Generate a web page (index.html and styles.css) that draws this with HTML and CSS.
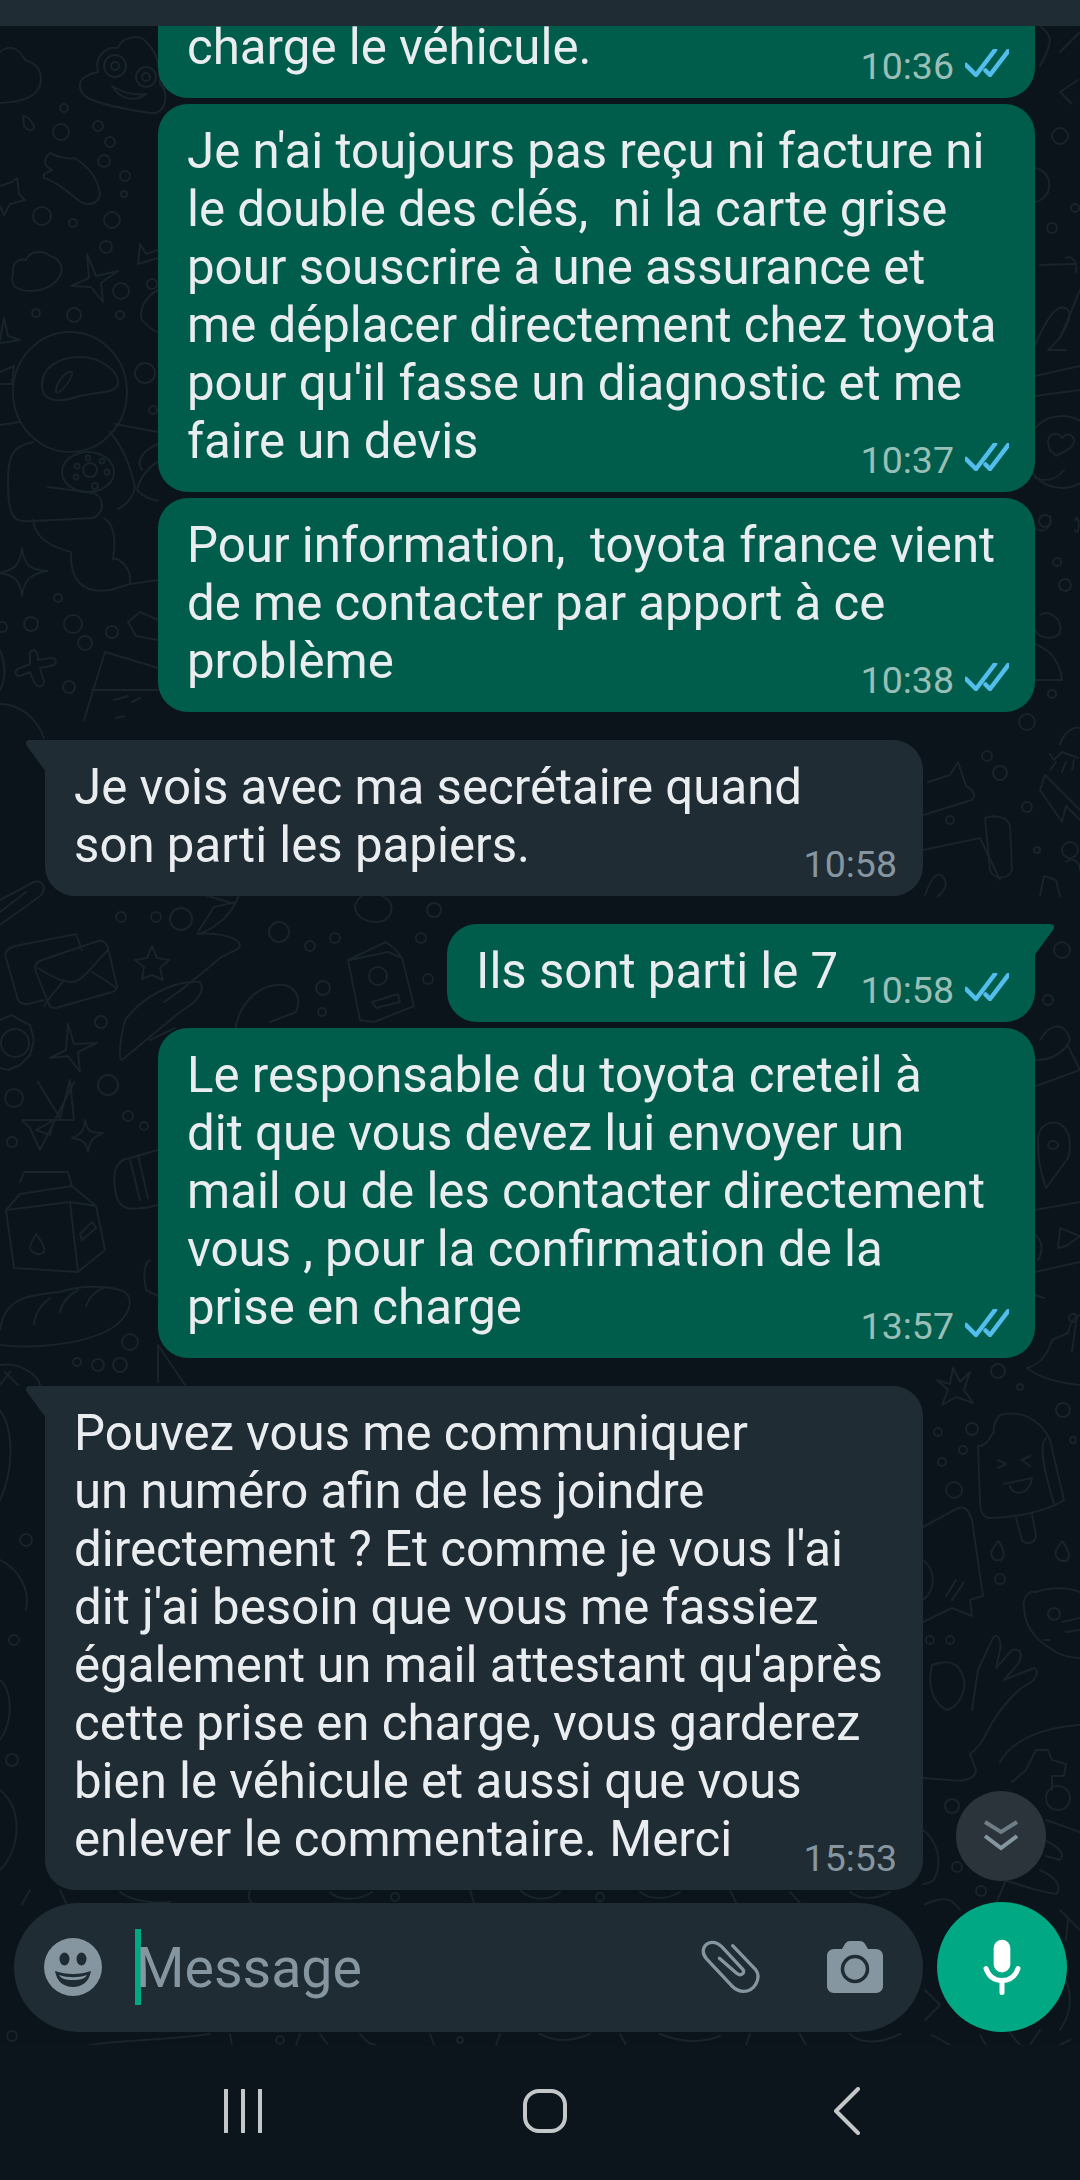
FILE: index.html
```html
<!doctype html>
<html lang="fr">
<head>
    <meta charset="UTF-8">
    <meta name="viewport" content="width=device-width, initial-scale=1.0">
    <title>Discussion</title>
    <link rel="stylesheet" href="styles.css">
</head>
<body>
    <div class="topbar"></div>

    <main class="chat">
        <!-- Wallpaper doodles, drawn in page coordinates -->
        <svg class="doodles" viewBox="0 26 1080 2019" fill="none">
            <!-- top left -->
            <path d="M0 103C20 102 40 98 41 80C41 66 32 62 25 60C18 46 8 45 0 52"/>
            <path d="M80 88C78 76 92 74 98 72C94 56 106 46 118 48C122 36 140 34 146 42C156 50 160 66 160 84C170 92 166 116 150 113C130 110 100 104 88 98C84 96 81 92 80 88Z"/>
            <circle cx="115" cy="66" r="11"/><circle cx="115" cy="66" r="4"/>
            <circle cx="146" cy="77" r="10"/><circle cx="146" cy="77" r="4"/>
            <path d="M112 86C122 92 134 96 146 94C136 102 120 100 112 86Z"/>
            <path d="M23 116C28 116 34 124 34 128C32 132 26 130 24 126Z"/>
            <circle cx="64" cy="108" r="4"/><circle cx="61" cy="132" r="8"/><circle cx="98" cy="126" r="5"/><circle cx="110" cy="142" r="5"/><circle cx="104" cy="161" r="6"/><circle cx="125" cy="176" r="5"/><circle cx="124" cy="194" r="3"/><circle cx="42" cy="216" r="9"/><circle cx="73" cy="223" r="4"/><circle cx="112" cy="220" r="8"/><circle cx="106" cy="247" r="6"/><circle cx="121" cy="291" r="8"/><circle cx="120" cy="315" r="4"/><circle cx="36" cy="313" r="4"/><circle cx="74" cy="315" r="7"/><circle cx="152" cy="284" r="5"/><circle cx="145" cy="373" r="10"/><circle cx="153" cy="410" r="4"/>
            <path d="M50 153C56 156 68 160 74 158C88 166 98 178 100 194C98 206 86 206 78 200C66 190 52 180 44 178C42 172 50 172 52 170C44 166 42 160 50 153Z"/>
            <path d="M0 186L12 182L17 178L19 194L25 200L10 204L4 215L0 206"/>
            <path d="M13 272C12 262 20 258 26 260C30 250 44 250 50 256C60 258 64 268 60 276C52 290 28 296 14 286C12 282 12 276 13 272Z"/>
            <path d="M87 254L96 276L118 271L101 283L103 302L91 287L71 286L89 278Z"/>
            <path d="M0 340L4 318L8 336L20 340L0 343"/>
            <!-- astronaut -->
            <ellipse cx="70" cy="392" rx="57" ry="60"/>
            <path d="M42 385C42 368 58 357 80 357C102 357 118 372 118 382C118 394 100 391 80 396C62 402 42 404 42 385Z"/>
            <path d="M56 392C56 380 68 370 72 372C74 376 60 396 56 392Z"/>
            <path d="M33 442C12 446 8 456 8 482C8 520 14 522 33 521L93 518C106 512 104 496 93 493L48 487"/>
            <ellipse cx="88" cy="472" rx="26" ry="20"/>
            <circle cx="90" cy="470" r="7"/><circle cx="77" cy="466" r="2.5"/><circle cx="88" cy="458" r="2.5"/><circle cx="102" cy="461" r="2.5"/><circle cx="107" cy="472" r="2.5"/><circle cx="76" cy="477" r="2.5"/><circle cx="95" cy="486" r="3"/>
            <path d="M33 520C35 540 55 548 71 552C70 580 82 594 110 590L130 584C132 566 118 558 113 559C116 540 114 524 104 518"/>
            <path d="M110 432C122 446 130 462 135 488C132 500 124 506 118 509M115 424L158 432M130 584L158 580M0 425L20 422"/>
            <path d="M137 490C140 474 156 462 158 462M137 490C144 498 158 502 158 500"/>
            <path d="M0 372L14 366L12 384L0 384"/>
            <path d="M22 548C24 565 30 570 47 571C30 574 24 580 22 596C20 580 14 575 0 573C14 570 20 565 22 548Z"/>
            <circle cx="58" cy="598" r="4"/><circle cx="31" cy="624" r="7"/><circle cx="73" cy="624" r="9"/><circle cx="85" cy="643" r="7"/><circle cx="112" cy="632" r="6"/><circle cx="69" cy="687" r="6"/><circle cx="2" cy="627" r="5"/>
            <path d="M30 652C35 648 38 652 38 660L50 658C58 658 58 664 50 666L40 668L44 682C42 688 38 688 34 682L30 672L20 676C14 676 14 670 20 668L30 664Z"/>
            <path d="M0 704C18 704 36 716 44 738M0 650C6 664 6 680 0 690"/>
            <path d="M105 652L158 668M105 652L84 720M92 690L158 690M114 700L128 696M132 702L140 698M116 718L124 716"/>
            <path d="M158 250L146 254L140 244L138 264L158 258M158 290C146 296 138 310 142 320C150 330 158 332 158 332"/>
            <path d="M158 444C142 450 136 462 142 470"/>
            <path d="M158 620L140 612L128 622L136 636L158 640"/>
            <!-- envelope row -->
            <path d="M0 925L40 896C48 888 42 880 34 882L0 900M0 912L26 892"/>
            <circle cx="121" cy="917" r="5"/><circle cx="156" cy="917" r="5"/><circle cx="181" cy="919" r="11"/><circle cx="279" cy="932" r="10"/><circle cx="310" cy="946" r="5"/><circle cx="335" cy="938" r="5"/><circle cx="323" cy="988" r="7"/><circle cx="322" cy="1012" r="4"/><circle cx="434" cy="910" r="7"/><circle cx="421" cy="938" r="5"/><circle cx="428" cy="979" r="5"/>
            <path d="M82 950L76 934L15 946C8 948 4 952 6 958L18 1000C20 1004 24 1004 28 1004L44 1000"/>
            <path d="M42 960C36 962 34 966 36 972L48 1002C50 1008 52 1008 56 1008L112 992C118 990 118 986 116 982L108 948C106 942 102 940 98 941ZM38 968C50 976 62 982 72 982C82 982 92 966 108 950M44 1006C50 996 60 986 64 980M116 988C106 980 98 976 92 972"/>
            <path d="M152 946L157 958L169 960L160 968L163 980L152 975L142 979L144 967L135 960L147 958Z"/>
            <path d="M205 895L235 904C228 918 212 930 198 934C212 932 238 936 240 945C240 950 230 952 220 958C200 975 180 992 164 1002"/>
            <path d="M198 932L214 907L236 902L240 892"/>
            <path d="M355 905C362 890 376 890 388 900C395 905 392 922 376 922C364 922 354 915 355 905Z"/>
            <path d="M348 960L386 942L396 950L402 958L414 1006L374 1022L360 1020ZM350 960L388 952L402 958M372 1002L398 994L400 1002L376 1008Z"/>
            <circle cx="378" cy="976" r="9"/>
            <path d="M125 1020C140 1000 170 980 200 982C205 990 200 1000 180 1012L122 1060C118 1060 120 1040 125 1020ZM150 1040L175 1028"/>
            <path d="M235 1030C240 1000 262 982 285 985C300 990 300 1002 296 1012L270 1022"/>
            <circle cx="15" cy="1043" r="14"/>
            <path d="M0 1020L12 1015L20 1020L30 1025L34 1040L30 1055L20 1065L8 1070L0 1068"/>
            <path d="M68 1024L74 1044L97 1043L78 1052L80 1072L68 1056L50 1058L66 1050Z"/>
            <circle cx="101" cy="1022" r="6"/><circle cx="108" cy="1085" r="10"/><circle cx="14" cy="1098" r="9"/><circle cx="128" cy="1116" r="5"/><circle cx="144" cy="1126" r="4"/><circle cx="12" cy="1142" r="5"/>
            <path d="M38 1082L60 1118L70 1080L74 1120L22 1120L30 1128L40 1150L74 1082M36 1130L54 1120L50 1135Z"/>
            <path d="M85 1120C88 1134 92 1132 103 1133C92 1138 90 1140 88 1152C86 1142 84 1140 72 1138C82 1134 84 1130 85 1120Z"/>
            <path d="M158 1150L130 1158C114 1160 112 1175 116 1195C120 1210 130 1212 158 1205M130 1160L140 1200M138 1155L148 1198"/>
            <!-- milk carton and bread -->
            <path d="M20 1182L24 1172L68 1172L72 1186L20 1194L6 1210L14 1268L78 1272L105 1250L96 1206L72 1186M6 1210L70 1202L78 1272M70 1202L96 1206M80 1234L92 1222L96 1228L82 1240Z"/>
            <path d="M36 1234C40 1240 46 1246 44 1252C40 1256 32 1254 30 1248C30 1244 34 1238 36 1234Z"/>
            <path d="M0 1330C4 1300 24 1295 60 1292C80 1285 110 1285 125 1292C134 1300 130 1316 112 1328C90 1342 40 1350 0 1345M34 1324C36 1312 40 1306 50 1298M60 1312C62 1302 70 1294 78 1290M86 1306C90 1296 96 1290 104 1288"/>
            <circle cx="130" cy="1342" r="8"/><circle cx="77" cy="1362" r="4"/><circle cx="98" cy="1365" r="6"/><circle cx="120" cy="1365" r="7"/>
            <path d="M0 1365C20 1362 38 1375 40 1385M0 1385L10 1372M5 1372L18 1385"/>
            <path d="M158 1345L158 1382M185 1385L158 1345M150 1260C146 1262 142 1270 146 1290L158 1296"/>
            <!-- left edge, low -->
            <path d="M0 1410C14 1430 14 1470 0 1500M0 1560C20 1570 30 1590 26 1610M0 1680C12 1690 14 1720 0 1740M0 1790C24 1810 20 1850 0 1870M30 1890L22 1904"/>
            <circle cx="14" cy="1640" r="5"/><circle cx="26" cy="1540" r="6"/><circle cx="12" cy="1760" r="6"/>
            <!-- right edge, top -->
            <path d="M1040 26C1052 36 1054 40 1040 66M1080 32L1060 52"/>
            <circle cx="1060" cy="136" r="8"/><circle cx="1052" cy="228" r="5"/><circle cx="1075" cy="208" r="4"/>
            <path d="M1035 168C1046 170 1052 180 1048 192C1044 200 1036 202 1035 202M1040 265L1074 264M1066 258C1072 254 1078 264 1076 272M1078 80L1060 92L1072 104"/>
            <path d="M1035 345C1046 320 1058 300 1068 310C1074 318 1060 340 1048 350L1066 350M1080 290L1060 338M1035 376L1080 366M1035 396L1080 390"/>
            <circle cx="1062" cy="452" r="36"/>
            <path d="M1048 442C1048 432 1060 432 1062 438C1066 432 1074 434 1074 442C1072 450 1062 452 1056 456C1052 452 1048 450 1048 442ZM1035 478C1046 482 1056 480 1064 470"/>
            <circle cx="1045" cy="521" r="6"/><circle cx="1057" cy="562" r="4"/><circle cx="1065" cy="585" r="6"/><circle cx="1052" cy="694" r="4"/>
            <path d="M1035 528C1045 535 1052 526 1050 516M1075 520C1080 510 1080 540 1075 530"/>
            <path d="M1040 615C1050 608 1064 622 1060 632C1056 640 1040 640 1035 630M1035 644C1050 650 1060 660 1062 680L1035 680"/>
            <path d="M1060 745C1064 730 1076 726 1080 728M1050 754L1054 760L1062 752L1078 758M1056 762L1050 770M1066 762L1062 772M1074 760L1072 770"/>
            <!-- incoming row side -->
            <circle cx="1027" cy="722" r="8"/><circle cx="987" cy="756" r="5"/><circle cx="1000" cy="773" r="7"/><circle cx="1027" cy="807" r="5"/><circle cx="1037" cy="850" r="3"/><circle cx="1070" cy="850" r="8"/><circle cx="950" cy="820" r="4"/>
            <path d="M928 782L950 775L958 762L966 786C974 790 976 796 972 800L923 815"/>
            <path d="M923 850L980 838L1000 880M985 818C992 815 1005 815 1010 825L1012 870C1008 880 994 880 990 870Z"/>
            <path d="M1045 775L1080 810M1045 775L1040 790L1062 822L1066 806L1080 820"/>
            <path d="M1066 862C1072 856 1080 862 1080 870M1060 896L1056 880L1044 876L1040 896"/>
            <path d="M925 895C932 876 938 870 944 878C948 884 944 892 938 896"/>
            <!-- outgoing row side -->
            <circle cx="1062" cy="950" r="8"/><circle cx="1048" cy="1000" r="5"/>
            <path d="M1040 1040C1052 1020 1066 1024 1070 1040C1064 1054 1050 1060 1036 1060M1036 1086L1080 1070L1068 1046"/>
            <path d="M1038 1140C1038 1124 1052 1120 1060 1124C1070 1130 1072 1144 1068 1158L1046 1188C1040 1170 1038 1160 1038 1140Z"/>
            <ellipse cx="1053" cy="1145" rx="5" ry="4"/>
            <path d="M1035 1210L1080 1202M1060 1228L1080 1236L1066 1246L1058 1248ZM1035 1272L1080 1262"/>
            <path d="M1035 1235C1042 1240 1044 1250 1038 1260M1035 1295L1044 1298"/>
            <path d="M1068 1333C1072 1316 1080 1315 1080 1315M1068 1333L1052 1340C1046 1360 1036 1365 1027 1368C1040 1378 1060 1383 1080 1385M1076 1322L1072 1352"/>
            <circle cx="1073" cy="1318" r="4"/>
            <!-- last incoming side -->
            <path d="M953 1368L960 1382L970 1372L964 1390L973 1403L956 1397L942 1405L948 1390L937 1380L950 1384Z"/>
            <circle cx="998" cy="1371" r="7"/><circle cx="1020" cy="1387" r="3"/><circle cx="1063" cy="1410" r="7"/><circle cx="1073" cy="1440" r="3"/><circle cx="938" cy="1432" r="4"/><circle cx="972" cy="1429" r="6"/><circle cx="963" cy="1450" r="4"/><circle cx="942" cy="1462" r="4"/><circle cx="954" cy="1490" r="8"/><circle cx="1000" cy="1579" r="5"/>
            <path d="M1000 1415C1020 1410 1040 1418 1050 1440L1064 1500C1054 1508 1020 1518 990 1518C982 1518 980 1510 980 1500L978 1446C988 1446 990 1436 994 1432C992 1424 998 1418 1000 1415ZM1046 1438C1036 1446 1050 1490 1054 1504"/>
            <path d="M1016 1518L1022 1540C1026 1546 1036 1542 1036 1536L1032 1514"/>
            <path d="M998 1460L1006 1464L998 1468M1030 1456L1022 1460L1030 1466M1004 1484L1032 1478C1030 1496 1012 1496 1010 1486"/>
            <path d="M998 1541C1004 1548 1006 1558 1000 1560C992 1562 990 1554 992 1550ZM1062 1541C1068 1548 1072 1558 1066 1561C1058 1562 1054 1556 1056 1550Z"/>
            <path d="M923 1527L958 1508C966 1506 968 1510 972 1520L983 1596L970 1600L972 1616L952 1608L923 1622M952 1600L964 1582M946 1596L956 1580"/>
            <path d="M923 1560C936 1570 936 1590 923 1600"/>
            <path d="M1036 1592C1028 1590 1022 1600 1024 1606C1024 1620 1030 1636 1050 1648C1060 1656 1072 1658 1080 1658M1036 1592C1052 1586 1070 1588 1080 1592"/>
            <circle cx="1054" cy="1614" r="6"/><path d="M1062 1622L1080 1618M1066 1632L1080 1630M1044 1640L1050 1640"/>
            <circle cx="930" cy="1640" r="4"/><circle cx="950" cy="1640" r="4"/>
            <path d="M932 1665C946 1660 960 1660 964 1680C966 1692 958 1708 946 1710C936 1704 926 1690 932 1665ZM978 1670L992 1640C996 1630 1002 1640 1000 1650L996 1668L1012 1650C1020 1648 1024 1654 1018 1664L1004 1680L1034 1668C1040 1670 1036 1680 1028 1684C1016 1690 1000 1708 988 1730C984 1740 976 1750 970 1754L976 1770C976 1778 966 1782 950 1780L923 1778M978 1670L972 1710"/>
            <path d="M1000 1762C1010 1744 1034 1728 1080 1725M1012 1782L1026 1770L1036 1750L1048 1750L1052 1760L1066 1764L1064 1776L1052 1776L1052 1790"/>
            <!-- right of the buttons -->
            <circle cx="952" cy="1806" r="7"/><circle cx="957" cy="1867" r="5"/><circle cx="981" cy="1891" r="5"/><circle cx="1058" cy="1798" r="12"/>
            <path d="M1046 1820L1080 1832M1044 1840C1058 1846 1066 1854 1060 1860L1046 1856M1040 1870C1062 1880 1060 1890 1056 1894C1040 1892 1024 1886 1004 1880M1006 1880L994 1908"/>
            <path d="M923 1830C936 1840 944 1860 934 1880C928 1884 924 1884 923 1884M925 1904C944 1896 952 1898 960 1910"/>
            <path d="M1060 1910L1080 1930M1068 1920L1066 1940M1062 1970C1072 1990 1074 2010 1060 2030M1040 2030L1030 2045M1070 2040L1060 2045"/>
            <path d="M925 1990L940 2005L925 2020M932 2035L950 2045M980 2035L986 2045M1010 2033L1020 2045"/>
            <!-- between the last bubble and the input -->
            <path d="M60 1890L66 1903M120 1892C130 1900 150 1904 170 1902M250 1890C248 1896 248 1900 252 1903M330 1892C340 1902 360 1900 372 1892M470 1890L474 1903M520 1890C530 1900 548 1902 560 1892M640 1892C650 1900 666 1900 680 1892M730 1890L736 1903M790 1892L800 1903M850 1892C860 1900 875 1900 890 1892"/>
            <circle cx="395" cy="1897" r="4"/><circle cx="600" cy="1897" r="4"/>
            <!-- under the input -->
            <path d="M90 2045C120 2040 170 2040 210 2034M230 2034L232 2045M300 2034L296 2045M320 2034L328 2045M360 2034C366 2042 370 2044 376 2045M430 2034L434 2045M500 2034L496 2045M540 2034C556 2042 570 2042 590 2034M620 2034L626 2045M660 2034C680 2042 700 2044 720 2036M750 2034L746 2045M800 2034L806 2045M850 2034C860 2044 880 2044 900 2034"/>
            <circle cx="280" cy="2040" r="4"/><circle cx="12" cy="2036" r="5"/><circle cx="460" cy="2040" r="3"/>
        </svg>

        <div class="msg out cut">
            <p class="text">charge le véhicule.</p>
            <span class="time">10:36<svg class="ticks" viewBox="0 0 44 28"><path d="M1 16L11 26L30 1M20.500 21.500L25 26L44 1"/></svg></span>
        </div>
        <div class="msg out">
            <p class="text">Je n'ai toujours pas reçu ni facture ni
le double des clés,  ni la carte grise
pour souscrire à une assurance et
me déplacer directement chez toyota
pour qu'il fasse un diagnostic et me
faire un devis</p>
            <span class="time">10:37<svg class="ticks" viewBox="0 0 44 28"><path d="M1 16L11 26L30 1M20.500 21.500L25 26L44 1"/></svg></span>
        </div>
        <div class="msg out">
            <p class="text">Pour information,  toyota france vient
de me contacter par apport à ce
problème</p>
            <span class="time">10:38<svg class="ticks" viewBox="0 0 44 28"><path d="M1 16L11 26L30 1M20.500 21.500L25 26L44 1"/></svg></span>
        </div>

        <div class="msg in first">
            <p class="text">Je vois avec ma secrétaire quand
son parti les papiers.</p>
            <span class="time">10:58</span>
        </div>

        <div class="msg out first short">
            <p class="text">Ils sont parti le 7</p>
            <span class="time">10:58<svg class="ticks" viewBox="0 0 44 28"><path d="M1 16L11 26L30 1M20.500 21.500L25 26L44 1"/></svg></span>
        </div>
        <div class="msg out">
            <p class="text">Le responsable du toyota creteil à
dit que vous devez lui envoyer un
mail ou de les contacter directement
vous , pour la confirmation de la
prise en charge</p>
            <span class="time">13:57<svg class="ticks" viewBox="0 0 44 28"><path d="M1 16L11 26L30 1M20.500 21.500L25 26L44 1"/></svg></span>
        </div>

        <div class="msg in first">
            <p class="text">Pouvez vous me communiquer
un numéro afin de les joindre
directement ? Et comme je vous l'ai
dit j'ai besoin que vous me fassiez
également un mail attestant qu'après
cette prise en charge, vous garderez
bien le véhicule et aussi que vous
enlever le commentaire. Merci</p>
            <span class="time">15:53</span>
        </div>

        <button class="scroll-down">
            <svg viewBox="0 0 36 32" width="36" height="32"><path class="chev-top" d="M2 2L18 12L34 2"/><path d="M2 16L18 28L34 16"/></svg>
        </button>

        <div class="composer">
            <div class="input">
                <svg class="emoji" viewBox="0 0 58 58" width="58" height="58">
                    <circle cx="29" cy="29" r="29" fill="#8696a0"/>
                    <ellipse cx="20.500" cy="21" rx="5" ry="6.500" fill="#1f2c34"/>
                    <ellipse cx="37.500" cy="21" rx="5" ry="6.500" fill="#1f2c34"/>
                    <path d="M11 33C22 37 36 37 47 33C45 44 38 49 29 49C20 49 13 44 11 33Z" fill="#1f2c34"/>
                    <path d="M15 37C24 40 34 40 43 37C41 41 36 42 29 42C22 42 17 41 15 37Z" fill="#8696a0"/>
                </svg>
                <span class="cursor"></span>
                <span class="placeholder">Message</span>
                <svg class="clip" viewBox="60 90 186 166" width="62" height="55" fill="none">
                    <path d="M158 107L228 180C245 205 225 245 190 245C175 245 165 238 155 228L80 148C60 125 70 100 95 97C108 96 118 103 125 110L190 180C195 192 180 200 170 190L118 145"/>
                </svg>
                <svg class="camera" viewBox="0 0 56 52" width="56" height="52">
                    <path d="M7 8H15L18 3C19 1 21 0 23 0H33C35 0 37 1 38 3L41 8H49C53 8 56 11 56 15V45C56 49 53 52 49 52H7C3 52 0 49 0 45V15C0 11 3 8 7 8Z" fill="#8696a0"/>
                    <circle cx="28" cy="28" r="12.500" fill="#8696a0" stroke="#1f2c34" stroke-width="3.500"/>
                </svg>
            </div>
            <button class="mic">
                <svg viewBox="0 0 120 170" width="40" height="57" fill="none">
                    <rect x="35" y="2" width="50" height="98" rx="25" fill="#fff"/>
                    <path d="M12 88C20 112 38 124 60 124C82 124 100 112 108 88" stroke="#fff" stroke-width="15" stroke-linecap="round"/>
                    <path d="M60 124V160" stroke="#fff" stroke-width="15" stroke-linecap="round"/>
                </svg>
            </button>
        </div>
    </main>

    <nav class="navbar">
        <svg viewBox="0 0 40 44" width="40" height="44"><path d="M3 1V43M20 1V43M37 1V43"/></svg>
        <svg viewBox="0 0 44 44" width="44" height="44"><rect x="2" y="2" width="40" height="40" rx="14"/></svg>
        <svg viewBox="0 0 26 48" width="26" height="48"><path d="M24 2L2 24L24 46"/></svg>
    </nav>
</body>
</html>
```

FILE: styles.css
```css
* {
    box-sizing: border-box;
}
body {
    margin: 0;
    width: 1080px;
    height: 2180px;
    display: flex;
    flex-direction: column;
    overflow: hidden;
    font-family: Roboto, "Noto Sans", sans-serif;
    background-color: #0a141a;
    color: #e9edef;
}
.topbar {
    height: 26px;
    flex-shrink: 0;
    background-color: #1f2c34;
}
.chat {
    flex: 1;
    position: relative;
    display: flex;
    flex-direction: column;
    justify-content: flex-end;
    overflow: hidden;
    padding-bottom: 13px;
}
.doodles {
    position: absolute;
    top: 0;
    left: 0;
    width: 1080px;
    height: 2019px;
    stroke: #18232a;
    stroke-width: 2;
    stroke-linecap: round;
    stroke-linejoin: round;
}

/* message bubbles */
.msg {
    position: relative;
    flex-shrink: 0;
    width: 877px;
    margin-top: 6px;
    padding: 18px 29px 22px;
    border-radius: 30px;
}
.msg.first {
    margin-top: 28px;
}
.msg.in {
    align-self: flex-start;
    margin-left: 45px;
    width: 878px;
    background-color: #1f2c34;
}
.msg.out {
    align-self: flex-end;
    margin-right: 45px;
    background-color: #005c4b;
}
.msg.short {
    width: 588px;
}
.msg.cut {
    border-top-left-radius: 0;
    border-top-right-radius: 0;
}
.msg.first.in {
    border-top-left-radius: 0;
}
.msg.first.out {
    border-top-right-radius: 0;
}
.msg.first::before {
    content: "";
    position: absolute;
    top: 0;
    width: 20px;
    height: 32px;
}
.msg.first.in::before {
    left: -19px;
    background-color: #1f2c34;
    clip-path: path("M20 32L1 6C-1 3 0 0 4 0H20Z");
}
.msg.first.out::before {
    right: -19px;
    background-color: #005c4b;
    clip-path: path("M0 32L19 6C21 3 20 0 16 0H0Z");
}
.text {
    margin: 0;
    font-size: 49.2px;
    line-height: 58px;
    white-space: pre-wrap;
}
.time {
    position: absolute;
    right: 26px;
    bottom: 13px;
    display: flex;
    align-items: flex-end;
    gap: 11px;
    font-size: 37.5px;
    line-height: 38px;
    color: #8696a0;
}
.out .time {
    color: #99bfb7;
}
.ticks {
    width: 44px;
    height: 28px;
    margin-bottom: 8px;
    fill: none;
    stroke: #53bdeb;
    stroke-width: 4.5;
    stroke-linecap: round;
    stroke-linejoin: round;
}

/* floating scroll button */
.scroll-down {
    position: absolute;
    right: 34px;
    bottom: 164px;
    width: 90px;
    height: 90px;
    padding: 0;
    border: none;
    border-radius: 50%;
    background-color: #2b343b;
    display: flex;
    align-items: center;
    justify-content: center;
}
.scroll-down svg {
    fill: none;
    stroke: #8696a0;
    stroke-width: 4;
}
.chev-top {
    opacity: 0.75;
}

/* input row */
.composer {
    position: relative;
    display: flex;
    align-items: center;
    gap: 14px;
    flex-shrink: 0;
    margin-top: 12px;
    padding: 0 13px 0 14px;
}
.input {
    flex: 1;
    height: 129px;
    display: flex;
    align-items: center;
    padding: 0 40px 0 30px;
    border-radius: 65px;
    background-color: #1f2c34;
}
.cursor {
    width: 6px;
    height: 76px;
    margin-left: 33px;
    background-color: #00a884;
}
.placeholder {
    flex: 1;
    margin-left: -5px;
    padding-top: 2px;
    font-size: 55.5px;
    color: #8696a0;
}
.clip {
    margin-right: 65px;
    stroke: #8696a0;
    stroke-width: 10;
    stroke-linecap: round;
    stroke-linejoin: round;
}
.mic {
    width: 130px;
    height: 130px;
    flex-shrink: 0;
    padding: 0;
    border: none;
    border-radius: 50%;
    background-color: #00a884;
    display: flex;
    align-items: center;
    justify-content: center;
}

/* android nav bar */
.navbar {
    height: 135px;
    flex-shrink: 0;
    display: grid;
    grid-template-columns: repeat(3, 302px);
    justify-content: center;
    justify-items: center;
    align-items: center;
    padding: 0 0 4px 10px;
    background-color: #0b151b;
}
.navbar svg {
    fill: none;
    stroke: #c4c7c8;
    stroke-width: 4;
    stroke-linecap: round;
    stroke-linejoin: round;
}
```
